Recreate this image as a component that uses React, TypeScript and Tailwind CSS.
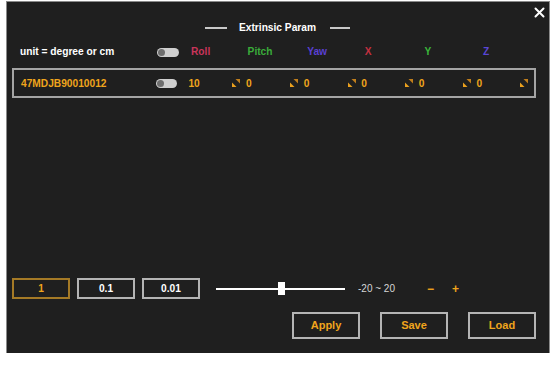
import React from "react";

const font = { fontFamily: '"Liberation Sans", Arial, sans-serif' };

function Toggle() {
  return (
    <div className="w-[22px] h-[9px] rounded-full bg-[#cfcfcf] flex items-center pl-[1px]">
      <div className="w-[7px] h-[7px] rounded-full bg-[#6e6e6e]" />
    </div>
  );
}

function Spin() {
  return (
    <svg width="8" height="8" viewBox="0 0 8 8">
      <path d="M3.5 0 L8 0 L8 4.5 Z" fill="#c07e1c" />
      <path d="M0 3.5 L0 8 L4.5 8 Z" fill="#eaa01e" />
    </svg>
  );
}

const cols = [
  { name: "Roll", color: "text-[#c9345a]", pl: "pl-[1px]" },
  { name: "Pitch", color: "text-[#3aac3a]", pl: "pl-[0px]" },
  { name: "Yaw", color: "text-[#5a3fd3]", pl: "pl-[2px]" },
  { name: "X", color: "text-[#c3303f]", pl: "pl-[2px]" },
  { name: "Y", color: "text-[#3ab43a]", pl: "pl-[4px]" },
  { name: "Z", color: "text-[#5a46d6]", pl: "pl-[5px]" },
];
const vals = ["10", "0", "0", "0", "0", "0"];

export default function App() {
  return (
    <div className="w-[550px] h-[365px] bg-white pl-[6px] pt-[1px]" style={font}>
      <div className="relative w-[544px] h-[352px] bg-[#1f1f1f] border-t border-l border-r border-[#8a8a8a] flex flex-col text-[10.2px] font-bold">
        <svg className="absolute top-[5px] right-[4px]" width="11" height="11" viewBox="0 0 11 11">
          <path d="M1.5 1.5 L9.5 9.5 M9.5 1.5 L1.5 9.5" stroke="#ffffff" strokeWidth="2" strokeLinecap="round" />
        </svg>

        <div className="mt-[19px] h-[14px] flex items-center pl-[198px]">
          <div className="w-[22px] h-[2px] bg-[#c8c8c8]" />
          <span className="ml-[12px] text-white">Extrinsic Param</span>
          <div className="ml-[14px] w-[20px] h-[2px] bg-[#c8c8c8]" />
        </div>

        <div className="mt-[9px] h-[16px] flex items-center pl-[13px]">
          <span className="w-[137px] text-white">unit = degree or cm</span>
          <Toggle />
          <div className="ml-[11px] flex">
            {cols.map((c) => (
              <span key={c.name} className={`w-[57.6px] ${c.color} ${c.pl}`}>
                {c.name}
              </span>
            ))}
          </div>
        </div>

        <div className="mt-[8px] ml-[5px] w-[524px] h-[30px] border-2 border-[#a4a4a4] flex items-center pl-[7px] pt-[1px]">
          <span className="w-[136px] text-[#f0a51c]">47MDJB90010012</span>
          <Toggle />
          <div className="ml-[11px] flex items-center">
            {vals.map((v, i) => (
              <div key={i} className="w-[57.6px] flex items-center">
                <span className="w-[44px] text-[#f0a51c]">{v}</span>
                <Spin />
              </div>
            ))}
          </div>
        </div>

        <div className="mt-[180px] ml-[5px] h-[21px] flex items-center">
          <div className="w-[58px] h-[21px] border-2 border-[#a57a26] flex items-center justify-center text-[#f0a51c]">1</div>
          <div className="ml-[7px] w-[58px] h-[21px] border-2 border-[#b4b4b4] flex items-center justify-center text-white">0.1</div>
          <div className="ml-[7px] w-[58px] h-[21px] border-2 border-[#b4b4b4] flex items-center justify-center text-white">0.01</div>
          <div className="relative ml-[16px] w-[129px] h-[13px] flex items-center">
            <div className="w-full h-[2px] bg-white" />
            <div className="absolute left-[62px] top-0 w-[7px] h-[13px] bg-white" />
          </div>
          <span className="ml-[13px] text-[10px] font-normal text-[#d6d6d6]">-20 ~ 20</span>
          <span className="ml-[32px] text-[12px] text-[#f0a51c]">−</span>
          <span className="ml-[18px] text-[12px] text-[#f0a51c]">+</span>
        </div>

        <div className="mt-[13px] ml-[285px] flex gap-[20px]">
          {["Apply", "Save", "Load"].map((b) => (
            <div key={b} className="w-[68px] h-[27px] border-2 border-[#b4b4b4] flex items-center justify-center text-[11px] text-[#f0a51c]">
              {b}
            </div>
          ))}
        </div>
      </div>
    </div>
  );
}
